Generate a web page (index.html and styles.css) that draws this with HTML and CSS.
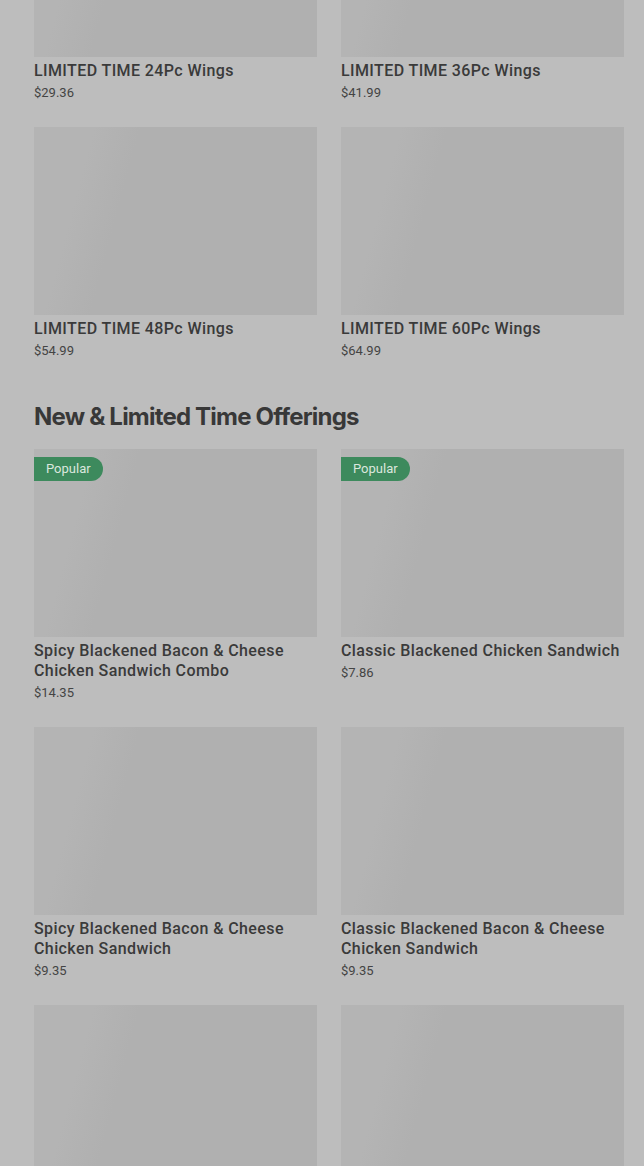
FILE: index.html
```html
<!DOCTYPE html>
<html lang="en">
<head>
<meta charset="utf-8">
<title>Menu</title>
<link rel="stylesheet" href="styles.css">
</head>
<body>
<main class="menu">
  <section class="category">
    <div class="grid">
      <article class="card">
        <div class="thumb"></div>
        <h3 class="name">LIMITED TIME 24Pc Wings</h3>
        <p class="price">$29.36</p>
      </article>
      <article class="card">
        <div class="thumb"></div>
        <h3 class="name">LIMITED TIME 36Pc Wings</h3>
        <p class="price">$41.99</p>
      </article>
      <article class="card">
        <div class="thumb"></div>
        <h3 class="name">LIMITED TIME 48Pc Wings</h3>
        <p class="price">$54.99</p>
      </article>
      <article class="card">
        <div class="thumb"></div>
        <h3 class="name">LIMITED TIME 60Pc Wings</h3>
        <p class="price">$64.99</p>
      </article>
    </div>
  </section>
  <section class="category">
    <h2 class="category-title">New &amp; Limited Time Offerings</h2>
    <div class="grid">
      <article class="card">
        <div class="thumb"><span class="badge">Popular</span></div>
        <h3 class="name">Spicy Blackened Bacon &amp; Cheese Chicken Sandwich Combo</h3>
        <p class="price">$14.35</p>
      </article>
      <article class="card">
        <div class="thumb"><span class="badge">Popular</span></div>
        <h3 class="name">Classic Blackened Chicken Sandwich</h3>
        <p class="price">$7.86</p>
      </article>
      <article class="card">
        <div class="thumb"></div>
        <h3 class="name">Spicy Blackened Bacon &amp; Cheese Chicken Sandwich</h3>
        <p class="price">$9.35</p>
      </article>
      <article class="card">
        <div class="thumb"></div>
        <h3 class="name">Classic Blackened Bacon &amp; Cheese Chicken Sandwich</h3>
        <p class="price">$9.35</p>
      </article>
      <article class="card">
        <div class="thumb"></div>
      </article>
      <article class="card">
        <div class="thumb"></div>
      </article>
    </div>
  </section>
</main>
</body>
</html>
```
FILE: styles.css
```css
html, body {
  margin: 0;
  padding: 0;
  background: #bdbdbd;
  overflow: hidden;
}

body {
  font-family: Roboto, "Liberation Sans", sans-serif;
  color: #3a3a3a;
}

.menu {
  padding: 0 20px 0 34px;
  margin-top: -131px;
}

.category + .category {
  margin-top: 40px;
}

.category-title {
  margin: 0 0 16px;
  font-family: Inter, "Noto Sans", sans-serif;
  font-size: 24px;
  line-height: 32px;
  font-weight: 700;
  letter-spacing: -0.8px;
  color: #383838;
}

.grid {
  display: grid;
  grid-template-columns: 1fr 1fr;
  column-gap: 24px;
  row-gap: 24px;
}

.card {
  display: flex;
  flex-direction: column;
}

.thumb {
  position: relative;
  height: 188px;
  background: linear-gradient(105deg, #b4b4b4 0%, #b4b4b4 18%, #b0b0b0 32%, #b0b0b0 100%);
}

.badge {
  position: absolute;
  top: 8px;
  left: 0;
  height: 24px;
  line-height: 24px;
  padding: 0 12px;
  border-radius: 0 12px 12px 0;
  background: #3d8a5d;
  color: #dbe7de;
  font-size: 13px;
}

.name {
  margin: 4px 0 0;
  font-size: 16px;
  line-height: 20px;
  font-weight: 500;
  letter-spacing: 0.4px;
  color: #3a3a3a;
}

.price {
  margin: 2px 0 0;
  font-size: 13px;
  line-height: 20px;
  color: #444;
}
```
